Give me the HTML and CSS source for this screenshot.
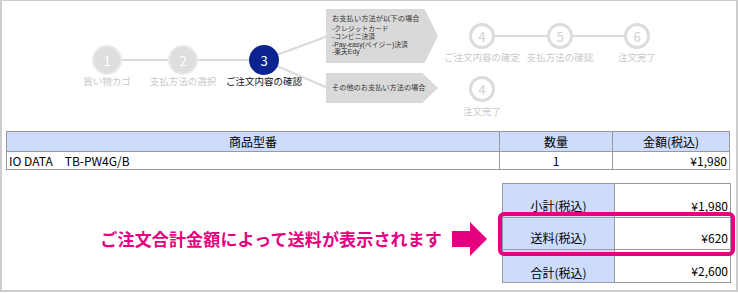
FILE: index.html
```html
<!DOCTYPE html>
<html lang="ja">
<head>
    <meta charset="UTF-8">
    <title>ご注文内容の確認</title>
    <link rel="stylesheet" href="styles.css">
</head>
<body>
    <div class="frame">
        <!-- ordering flow diagram -->
        <div class="flow">
            <svg class="wires" width="736" height="130" viewBox="0 0 736 130">
                <line x1="105" y1="59" x2="261" y2="59"/>
                <line x1="261" y1="59" x2="326" y2="35"/>
                <line x1="261" y1="59" x2="326" y2="87"/>
                <line x1="480" y1="35" x2="635" y2="35"/>
            </svg>

            <div class="node" style="left: 60px; top: 44px;">
                <span class="dot done">1</span>
                <span class="label">買い物カゴ</span>
            </div>
            <div class="node" style="left: 136px; top: 44px;">
                <span class="dot done">2</span>
                <span class="label">支払方法の選択</span>
            </div>
            <div class="node" style="left: 217px; top: 44px;">
                <span class="dot current">3</span>
                <span class="label current-label">ご注文内容の確認</span>
            </div>

            <div class="branch upper">
                <p class="branch-title">お支払い方法が以下の場合</p>
                <ul>
                    <li>-クレジットカード</li>
                    <li>-コンビニ決済</li>
                    <li>-Pay-easy(ペイジー)決済</li>
                    <li>-楽天Edy</li>
                </ul>
            </div>
            <div class="branch lower">
                <p class="branch-title">その他のお支払い方法の場合</p>
            </div>

            <div class="node small" style="left: 435px; top: 22px;">
                <span class="dot todo">4</span>
                <span class="label">ご注文内容の確定</span>
            </div>
            <div class="node small" style="left: 513px; top: 22px;">
                <span class="dot todo">5</span>
                <span class="label">支払方法の確認</span>
            </div>
            <div class="node small" style="left: 590px; top: 22px;">
                <span class="dot todo">6</span>
                <span class="label">注文完了</span>
            </div>
            <div class="node small low" style="left: 435px; top: 75px;">
                <span class="dot todo">4</span>
                <span class="label">注文完了</span>
            </div>
        </div>

        <table class="items">
            <thead>
                <tr>
                    <th class="col-name">商品型番</th>
                    <th class="col-qty">数量</th>
                    <th class="col-price">金額(税込)</th>
                </tr>
            </thead>
            <tbody>
                <tr>
                    <td class="name">IO DATA　TB-PW4G/B</td>
                    <td class="qty">1</td>
                    <td class="price">¥1,980</td>
                </tr>
            </tbody>
        </table>

        <div class="summary">
            <div class="note">
                <span class="note-text">ご注文合計金額によって送料が表示されます</span>
                <svg class="note-arrow" width="36" height="34" viewBox="0 0 36 34">
                    <polygon points="0,9 18,9 18,0 35,17 18,34 18,25 0,25"/>
                </svg>
            </div>
            <div class="totals">
                <table>
                    <tr class="row-sub">
                        <th>小計(税込)</th>
                        <td>¥1,980</td>
                    </tr>
                    <tr class="row-ship">
                        <th>送料(税込)</th>
                        <td>¥620</td>
                    </tr>
                    <tr class="row-total">
                        <th>合計(税込)</th>
                        <td>¥2,600</td>
                    </tr>
                </table>
                <div class="highlight"></div>
            </div>
        </div>
    </div>
</body>
</html>
```

FILE: styles.css
```css
* {
    margin: 0;
    padding: 0;
    box-sizing: border-box;
}

body {
    font-family: "Noto Sans CJK JP", "Noto Sans", sans-serif;
    background: #fff;
    color: #000;
}

.frame {
    width: 738px;
    height: 292px;
    border: 2px solid #cdcdcd;
    border-top-width: 1px;
    padding: 0 5px 0 4px;
}

/* flow diagram */
.flow {
    position: relative;
    height: 130px;
    margin: 0 -5px 0 -4px;
}

.wires {
    position: absolute;
    left: 0;
    top: 0;
}

.wires line {
    stroke: #dadada;
    stroke-width: 2;
}

.node {
    position: absolute;
    width: 90px;
    display: flex;
    flex-direction: column;
    align-items: center;
}

.dot {
    width: 30px;
    height: 30px;
    border-radius: 50%;
    display: flex;
    align-items: center;
    justify-content: center;
    font-size: 13px;
    line-height: 1;
}

.dot.done {
    background: #dedede;
    border: 2px solid #e9e9e9;
    color: #fff;
}

.dot.current {
    background: #0b2391;
    color: #fff;
}

.dot.todo {
    width: 26px;
    height: 26px;
    background: #fff;
    border: 3px solid #dcdcdc;
    color: #d2d2d2;
}

.label {
    font-size: 9.5px;
    line-height: 12px;
    color: #c9c9c9;
    white-space: nowrap;
}

.current-label {
    color: #111;
}

.node.small .label {
    margin-top: 2px;
}

.node.low .label {
    margin-top: 3px;
}

.branch {
    position: absolute;
    left: 324px;
    width: 112px;
    background: #d9d9d9;
    color: #333;
    font-family: "Liberation Sans", "Noto Sans CJK JP", sans-serif;
    font-size: 6.8px;
    padding-left: 6px;
    white-space: nowrap;
}

.branch.upper {
    top: 8px;
    height: 54px;
    padding-top: 6px;
    clip-path: polygon(0 0, 88% 0, 100% 50%, 88% 100%, 0 100%);
}

.branch.lower {
    top: 72px;
    height: 30px;
    display: flex;
    align-items: center;
    font-size: 7.2px;
    clip-path: polygon(0 0, 86% 0, 100% 50%, 86% 100%, 0 100%);
}

.branch-title {
    line-height: 8.5px;
}

.branch.upper .branch-title {
    font-size: 7.3px;
    margin-bottom: 1.5px;
}

.branch ul {
    list-style: none;
    line-height: 7.8px;
}

/* item table */
table {
    border-collapse: collapse;
    font-size: 12px;
}

.items {
    width: 724px;
}

.items th,
.items td {
    border: 1px solid #9a9a9a;
    font-weight: normal;
}

.items th {
    background: #cddcfd;
    height: 20px;
    line-height: 16px;
}

.items td {
    height: 18px;
    line-height: 15px;
    padding: 0 2px;
}

.col-name {
    width: 493px;
}

.col-qty {
    width: 113px;
}

.items .qty {
    text-align: center;
}

.items .price {
    text-align: right;
}

/* totals */
.summary {
    display: flex;
    justify-content: flex-end;
    align-items: center;
    gap: 14px;
    margin-top: 13px;
}

.note {
    display: flex;
    align-items: center;
    gap: 10px;
    padding-top: 11px;
}

.note-text {
    color: #e4007f;
    font-size: 17px;
    font-weight: 700;
    letter-spacing: 0.15px;
    white-space: nowrap;
}

.note-arrow polygon {
    fill: #e4007f;
}

.totals {
    position: relative;
}

.totals table {
    width: 229px;
}

.totals th,
.totals td {
    border: 1px solid #9a9a9a;
    vertical-align: bottom;
    padding: 0 2px 4px;
    line-height: 15px;
}

.totals th {
    width: 112px;
    background: #cddcfd;
    font-weight: normal;
    text-align: center;
}

.totals td {
    text-align: right;
}

.row-sub th { height: 34px; }
.row-ship th { height: 32px; }
.row-total th { height: 33px; padding-bottom: 2px; }

.highlight {
    position: absolute;
    left: -4px;
    top: 29px;
    width: 237px;
    height: 44px;
    border: 4px solid #e4007f;
    border-radius: 6px;
}
```
